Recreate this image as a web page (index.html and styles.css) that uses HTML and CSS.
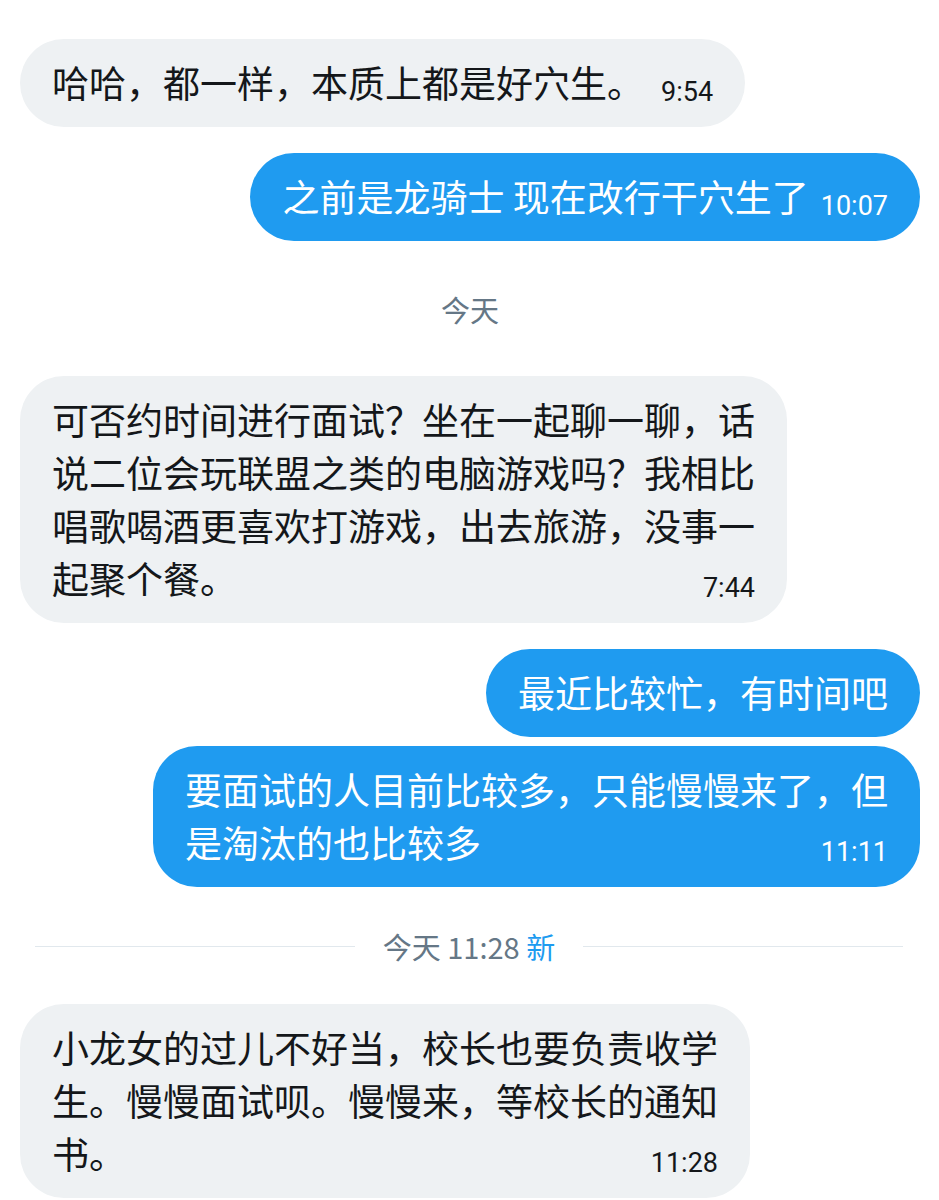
FILE: index.html
```html
<!DOCTYPE html>
<html>
<head>
  <meta charset="utf-8">
  <title>Messages</title>
  <link rel="stylesheet" href="styles.css">
</head>
<body>
  <div class="chat">
    <div class="row">
      <div class="bubble in">哈哈，都一样，本质上都是好穴生。<span class="time">9:54</span></div>
    </div>

    <div class="row out">
      <div class="bubble out">之前是龙骑士 现在改行干穴生了<span class="time">10:07</span></div>
    </div>

    <div class="day">今天</div>

    <div class="row">
      <div class="bubble in">可否约时间进行面试？坐在一起聊一聊，话<br>说二位会玩联盟之类的电脑游戏吗？我相比<br>唱歌喝酒更喜欢打游戏，出去旅游，没事一<br>起聚个餐。<span class="time">7:44</span></div>
    </div>

    <div class="row out">
      <div class="bubble out">最近比较忙，有时间吧</div>
    </div>

    <div class="row out next">
      <div class="bubble out">要面试的人目前比较多，只能慢慢来了，但<br>是淘汰的也比较多<span class="time">11:11</span></div>
    </div>

    <div class="divider">
      <span class="line"></span>
      <span class="divider-text">今天 11:28 <span class="new">新</span></span>
      <span class="line"></span>
    </div>

    <div class="row">
      <div class="bubble in">小龙女的过儿不好当，校长也要负责收学<br>生。慢慢面试呗。慢慢来，等校长的通知<br>书。<span class="time">11:28</span></div>
    </div>
  </div>
</body>
</html>
```

FILE: styles.css
```css
body { margin: 0; background: #fff; color: #14171a; font-family: "Noto Sans CJK SC", "Noto Sans", sans-serif; }

.chat { padding: 13px 19px 0 20px; }

.row { display: flex; margin-top: 26px; }
.row.out { justify-content: flex-end; }
.row.next { margin-top: 9px; }

.bubble { padding: 17px 32px 18px; font-size: 37px; line-height: 53px; border-radius: 44px; white-space: nowrap; }
.bubble.in { background: #eef1f3; color: #14171a; }
.bubble.out { background: #1f9bf0; color: #fff; }
.bubble.out .time { margin-left: 12px; }

.time { float: right; margin: 21px 0 0 17px; font-family: Roboto, "Liberation Sans", sans-serif; font-size: 27px; line-height: 30px; }

.day { margin: 48px 0 47px; text-align: center; font-size: 29px; line-height: 40px; color: #657786; }

.divider { display: flex; align-items: center; gap: 28px; margin: 39px 17px 38px 15px; height: 40px; }
.divider .line { flex: 1; height: 1px; background: #e1e8ed; }
.divider-text { font-size: 29px; line-height: 40px; color: #657786; }
.divider-text .new { color: #1d9bf0; }
```
